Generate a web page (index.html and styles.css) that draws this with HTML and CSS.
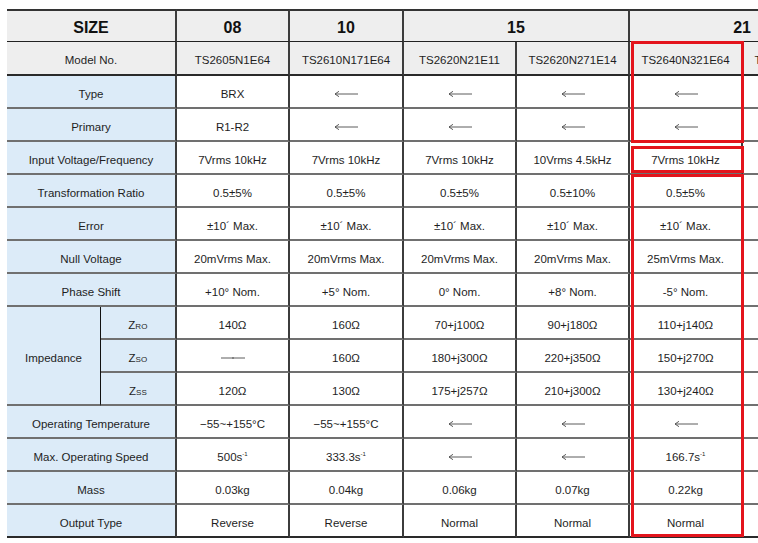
FILE: index.html
```html
<!DOCTYPE html>
<html>
<head>
<meta charset="utf-8">
<link rel="stylesheet" href="styles.css">
</head>
<body>
<div class="sheet">
<table class="spec">
<colgroup>
<col class="c-lab1"><col class="c-lab2">
<col class="c-d"><col class="c-d2"><col class="c-d"><col class="c-d"><col class="c-d"><col class="c-d">
</colgroup>
<tr class="r-size">
<th colspan="2" class="lab-h">SIZE</th><th>08</th><th>10</th><th colspan="2">15</th><th colspan="2">21</th>
</tr>
<tr class="r-model">
<td colspan="2" class="lab-h">Model No.</td><td>TS2605N1E64</td><td>TS2610N171E64</td><td>TS2620N21E11</td><td>TS2620N271E14</td><td>TS2640N321E64</td><td>TS2640N331E64</td>
</tr>
<tr>
<td colspan="2" class="lab">Type</td><td>BRX</td>
<td><svg class="arr" viewBox="0 0 24 8"><path d="M1 4H24M5 1.3L1 4L5 6.7"/></svg></td>
<td><svg class="arr" viewBox="0 0 24 8"><path d="M1 4H24M5 1.3L1 4L5 6.7"/></svg></td>
<td><svg class="arr" viewBox="0 0 24 8"><path d="M1 4H24M5 1.3L1 4L5 6.7"/></svg></td>
<td><svg class="arr" viewBox="0 0 24 8"><path d="M1 4H24M5 1.3L1 4L5 6.7"/></svg></td>
<td></td>
</tr>
<tr>
<td colspan="2" class="lab">Primary</td><td>R1-R2</td>
<td><svg class="arr" viewBox="0 0 24 8"><path d="M1 4H24M5 1.3L1 4L5 6.7"/></svg></td>
<td><svg class="arr" viewBox="0 0 24 8"><path d="M1 4H24M5 1.3L1 4L5 6.7"/></svg></td>
<td><svg class="arr" viewBox="0 0 24 8"><path d="M1 4H24M5 1.3L1 4L5 6.7"/></svg></td>
<td><svg class="arr" viewBox="0 0 24 8"><path d="M1 4H24M5 1.3L1 4L5 6.7"/></svg></td>
<td></td>
</tr>
<tr>
<td colspan="2" class="lab">Input Voltage/Frequency</td><td>7Vrms 10kHz</td><td>7Vrms 10kHz</td><td>7Vrms 10kHz</td><td>10Vrms 4.5kHz</td><td>7Vrms 10kHz</td><td></td>
</tr>
<tr>
<td colspan="2" class="lab">Transformation Ratio</td><td>0.5±5%</td><td>0.5±5%</td><td>0.5±5%</td><td>0.5±10%</td><td>0.5±5%</td><td></td>
</tr>
<tr>
<td colspan="2" class="lab">Error</td><td>±10´ Max.</td><td>±10´ Max.</td><td>±10´ Max.</td><td>±10´ Max.</td><td>±10´ Max.</td><td></td>
</tr>
<tr>
<td colspan="2" class="lab">Null Voltage</td><td>20mVrms Max.</td><td>20mVrms Max.</td><td>20mVrms Max.</td><td>20mVrms Max.</td><td>25mVrms Max.</td><td></td>
</tr>
<tr>
<td colspan="2" class="lab">Phase Shift</td><td>+10° Nom.</td><td>+5° Nom.</td><td>0° Nom.</td><td>+8° Nom.</td><td>-5° Nom.</td><td></td>
</tr>
<tr>
<td rowspan="3" class="lab lab-imp">Impedance</td><td class="lab">Z<span class="sub">RO</span></td><td>140Ω</td><td>160Ω</td><td>70+j100Ω</td><td>90+j180Ω</td><td>110+j140Ω</td><td></td>
</tr>
<tr>
<td class="lab">Z<span class="sub">SO</span></td><td><svg class="dash" viewBox="0 0 26 6"><path d="M1 3H25M13 2V4"/></svg></td><td>160Ω</td><td>180+j300Ω</td><td>220+j350Ω</td><td>150+j270Ω</td><td></td>
</tr>
<tr>
<td class="lab">Z<span class="sub">SS</span></td><td>120Ω</td><td>130Ω</td><td>175+j257Ω</td><td>210+j300Ω</td><td>130+j240Ω</td><td></td>
</tr>
<tr>
<td colspan="2" class="lab">Operating Temperature</td><td>−55~+155°C</td><td>−55~+155°C</td>
<td><svg class="arr" viewBox="0 0 24 8"><path d="M1 4H24M5 1.3L1 4L5 6.7"/></svg></td>
<td><svg class="arr" viewBox="0 0 24 8"><path d="M1 4H24M5 1.3L1 4L5 6.7"/></svg></td>
<td><svg class="arr" viewBox="0 0 24 8"><path d="M1 4H24M5 1.3L1 4L5 6.7"/></svg></td>
<td></td>
</tr>
<tr>
<td colspan="2" class="lab">Max. Operating Speed</td><td>500s<sup class="sup">-1</sup></td><td>333.3s<sup class="sup">-1</sup></td>
<td><svg class="arr" viewBox="0 0 24 8"><path d="M1 4H24M5 1.3L1 4L5 6.7"/></svg></td>
<td><svg class="arr" viewBox="0 0 24 8"><path d="M1 4H24M5 1.3L1 4L5 6.7"/></svg></td>
<td>166.7s<sup class="sup">-1</sup></td><td></td>
</tr>
<tr>
<td colspan="2" class="lab">Mass</td><td>0.03kg</td><td>0.04kg</td><td>0.06kg</td><td>0.07kg</td><td>0.22kg</td><td></td>
</tr>
<tr class="r-last">
<td colspan="2" class="lab">Output Type</td><td>Reverse</td><td>Reverse</td><td>Normal</td><td>Normal</td><td>Normal</td><td></td>
</tr>
</table>
<div class="mark mark-a"></div>
<div class="mark mark-b"></div>
<div class="mark mark-c"></div>
</div>
</body>
</html>
```
FILE: styles.css
```css
html, body {
  margin: 0;
  padding: 0;
  background: #ffffff;
}
body {
  width: 758px;
  height: 543px;
  overflow: hidden;
  font-family: "Liberation Sans", Arial, sans-serif;
  color: #1e1e1e;
}
.sheet {
  position: relative;
  padding: 9px 0 0 7px;
}
.spec {
  border-collapse: separate;
  border-spacing: 0;
  table-layout: fixed;
  width: 849px;
}
.c-lab1 { width: 94px; }
.c-lab2 { width: 76px; }
.c-d { width: 113px; }
.c-d2 { width: 114px; }
.spec th,
.spec td {
  box-sizing: border-box;
  height: 33px;
  padding: 4px 0 0 0;
  text-align: center;
  vertical-align: middle;
  border-right: 2px solid #3c3c3c;
  border-bottom: 2px solid #707070;
  font-size: 11.5px;
  font-weight: normal;
  white-space: nowrap;
  overflow: hidden;
}
.r-size th {
  background: #eeeeee;
  font-size: 16px;
  font-weight: bold;
  color: #111;
  padding-top: 3px;
  border-top: 2px solid #333;
  border-bottom: 1px solid #222;
}
.r-model td {
  background: #eeeeee;
  height: 34px;
  border-bottom: 2px solid #2a2a2a;
}
.r-last td {
  border-bottom: 2px solid #2a2a2a;
}
.spec .lab {
  background: #dcebf8;
}
.spec .lab-imp {
  border-right: 1px solid #111;
}
.sub {
  font-size: 8px;
  letter-spacing: 0.2px;
}
.sup {
  font-size: 6px;
  vertical-align: 5px;
  line-height: 0;
}
.arr {
  width: 24px;
  height: 8px;
  display: inline-block;
  vertical-align: middle;
}
.arr path,
.dash path {
  fill: none;
  stroke: #4a4a4a;
  stroke-width: 0.9;
}
.dash {
  width: 26px;
  height: 6px;
  display: inline-block;
  vertical-align: middle;
}
.mark {
  position: absolute;
  box-sizing: border-box;
  left: 631px;
  width: 113px;
  border: 3px solid #e3141c;
}
.mark-a { top: 41px; height: 102px; }
.mark-b { top: 146px; height: 27px; }
.mark-c { top: 174px; height: 363px; }
```
